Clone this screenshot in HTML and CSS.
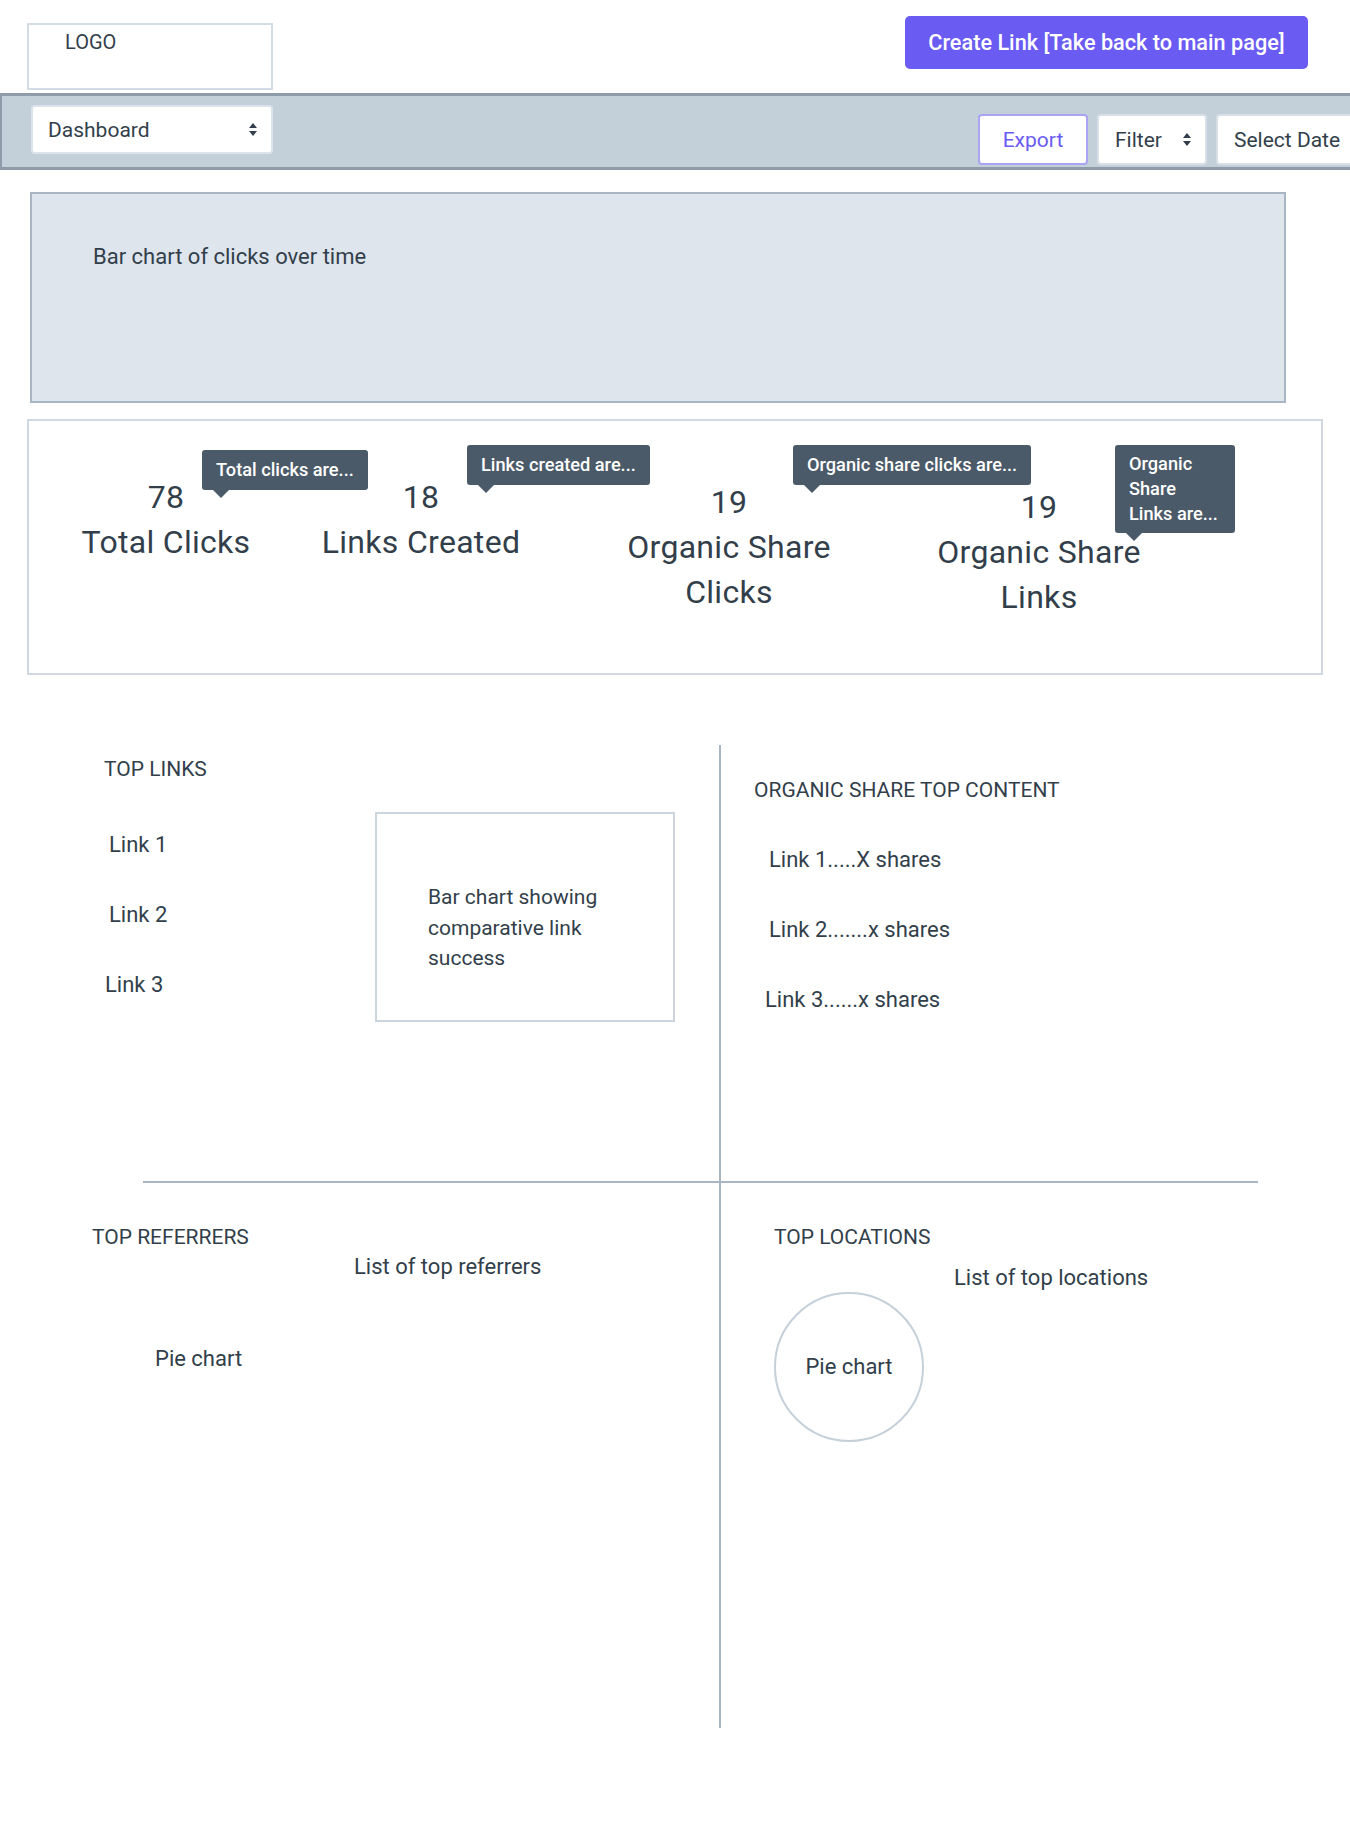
FILE: index.html
```html
<!DOCTYPE html>
<html lang="en">
<head>
<meta charset="utf-8">
<title>Dashboard</title>
<link rel="stylesheet" href="styles.css">
</head>
<body>
<header class="topbar">
  <div class="logo">LOGO</div>
  <button class="btn-primary">Create Link [Take back to main page]</button>
</header>
<nav class="navbar">
  <div class="select select-dashboard">
    <span>Dashboard</span>
    <svg class="updown" width="8" height="13" viewBox="0 0 8 13"><path d="M4 0L8 5H0Z M0 8H8L4 13Z" fill="#323f4b"/></svg>
  </div>
  <div class="nav-actions">
    <button class="btn btn-export">Export</button>
    <div class="btn select-filter">
      <span>Filter</span>
      <svg class="updown" width="8" height="13" viewBox="0 0 8 13"><path d="M4 0L8 5H0Z M0 8H8L4 13Z" fill="#323f4b"/></svg>
    </div>
    <button class="btn btn-date">Select Date</button>
  </div>
</nav>
<main>
  <section class="chart-panel">Bar chart of clicks over time</section>
  <section class="stats">
    <div class="stat stat-1">
      <div class="stat-num">78</div>
      <div class="stat-label">Total Clicks</div>
      <div class="tip tip-1">Total clicks are...</div>
    </div>
    <div class="stat stat-2">
      <div class="stat-num">18</div>
      <div class="stat-label">Links Created</div>
      <div class="tip tip-2">Links created are...</div>
    </div>
    <div class="stat stat-3">
      <div class="stat-num">19</div>
      <div class="stat-label">Organic Share Clicks</div>
      <div class="tip tip-3">Organic share clicks are...</div>
    </div>
    <div class="stat stat-4">
      <div class="stat-num">19</div>
      <div class="stat-label">Organic Share Links</div>
      <div class="tip tip-4">Organic Share Links are...</div>
    </div>
  </section>
  <section class="quadrants">
    <div class="q q-left q-top-left">
      <h2 class="q-title">TOP LINKS</h2>
      <div class="toplinks-body">
        <div class="link-list">
          <div class="link-item">Link 1</div>
          <div class="link-item">Link 2</div>
          <div class="link-item flush">Link 3</div>
        </div>
        <div class="bar-box">Bar chart showing comparative link success</div>
      </div>
    </div>
    <div class="q q-top-right">
      <h2 class="q-title">ORGANIC SHARE TOP CONTENT</h2>
      <div class="share-list">
        <div class="share-item">Link 1.....X shares</div>
        <div class="share-item">Link 2.......x shares</div>
        <div class="share-item flush">Link 3......x shares</div>
      </div>
    </div>
    <div class="divider-row"><div class="hline"></div></div>
    <div class="q q-left q-bottom-left">
      <h2 class="q-title">TOP REFERRERS</h2>
      <div class="ref-list">List of top referrers</div>
      <div class="pie-label">Pie chart</div>
    </div>
    <div class="q q-bottom-right">
      <h2 class="q-title">TOP LOCATIONS</h2>
      <div class="loc-list">List of top locations</div>
      <div class="pie-circle">Pie chart</div>
    </div>
  </section>
</main>
</body>
</html>
```
FILE: styles.css
```css
html, body {
  margin: 0;
  padding: 0;
  overflow-x: hidden;
}
body {
  width: 1350px;
  background: #ffffff;
  color: #323f4b;
  font-family: Roboto, "Liberation Sans", sans-serif;
  font-size: 22px;
  line-height: 26px;
}
button {
  font-family: inherit;
}

/* header */
.topbar {
  display: flex;
  justify-content: space-between;
  align-items: flex-start;
  height: 93px;
  box-sizing: border-box;
  padding: 16px 42px 0 27px;
}
.logo {
  margin-top: 7px;
  width: 246px;
  height: 67px;
  box-sizing: border-box;
  border: 2px solid #d3dce4;
  padding: 4px 0 0 36px;
  font-size: 20px;
  line-height: 26px;
}
.btn-primary {
  width: 403px;
  height: 53px;
  border: 0;
  border-radius: 5px;
  background: #6a5bf3;
  color: #ffffff;
  font-size: 21.7px;
  font-weight: 500;
  cursor: pointer;
}

/* nav bar */
.navbar {
  display: flex;
  justify-content: space-between;
  align-items: flex-start;
  width: 1362px;
  height: 77px;
  box-sizing: border-box;
  padding: 9px 0 0 29px;
  background: #c3cfd9;
  border-top: 3px solid #8e9ba8;
  border-bottom: 3px solid #8e9ba8;
  border-left: 2px solid #8e9ba8;
}
.select-dashboard {
  width: 242px;
  height: 49px;
  box-sizing: border-box;
  display: flex;
  align-items: center;
  justify-content: space-between;
  padding: 0 14px 0 15px;
  background: #ffffff;
  border: 2px solid #dce3ea;
  border-radius: 4px;
  font-size: 21px;
}
.nav-actions {
  display: flex;
  gap: 9px;
  margin-top: 9px;
}
.btn {
  height: 51px;
  box-sizing: border-box;
  display: flex;
  align-items: center;
  padding: 0 16px;
  background: #ffffff;
  border: 2px solid #d8dfe6;
  border-radius: 4px;
  color: #323f4b;
  font-size: 21px;
}
.btn-export {
  width: 110px;
  justify-content: center;
  border-color: #aba3f3;
  color: #6a5bf3;
}
.select-filter {
  width: 110px;
  justify-content: space-between;
  padding: 0 14px 0 16px;
}
.btn-date {
  width: 146px;
}

/* bar chart panel */
.chart-panel {
  margin: 22px 0 0 30px;
  width: 1256px;
  height: 211px;
  box-sizing: border-box;
  padding: 48px 0 0 61px;
  background: #dfe5ed;
  border: 2px solid #a8b6c3;
  font-size: 22px;
  line-height: 30px;
}

/* stats */
.stats {
  margin: 16px 0 0 27px;
  width: 1296px;
  height: 256px;
  box-sizing: border-box;
  border: 2px solid #d0d9e1;
  display: flex;
  align-items: flex-start;
  padding: 54px 0 0 27px;
}
.stat {
  position: relative;
  width: 220px;
  text-align: center;
  font-size: 32px;
  line-height: 45px;
  letter-spacing: 0.3px;
}
.stat-2 { margin-left: 35px; }
.stat-3 { margin-left: 88px; margin-top: 5px; }
.stat-4 { margin-left: 90px; margin-top: 10px; }

.tip {
  position: absolute;
  left: 50%;
  background: #4b5a68;
  color: #ffffff;
  font-size: 18.2px;
  font-weight: 500;
  line-height: 24px;
  letter-spacing: 0;
  text-align: left;
  padding: 8px 14px;
  border-radius: 3px;
  white-space: nowrap;
}
.tip::after {
  content: "";
  position: absolute;
  top: 100%;
  left: 11px;
  border-left: 8px solid transparent;
  border-right: 8px solid transparent;
  border-top: 8px solid #4b5a68;
}
.tip-1 { top: -25px; margin-left: 36px; }
.tip-2 { top: -30px; margin-left: 46px; }
.tip-3 { top: -35px; margin-left: 64px; }
.tip-4 {
  top: -40px;
  margin-left: 76px;
  width: 120px;
  box-sizing: border-box;
  white-space: normal;
  line-height: 25px;
  padding: 6px 14px 7px;
}

/* quadrants */
.quadrants {
  margin-top: 70px;
  display: grid;
  grid-template-columns: 721px 1fr;
}
.q {
  box-sizing: border-box;
}
.q-left {
  border-right: 2px solid #a9b6c3;
}
.q-title {
  margin: 0;
  font-size: 21px;
  font-weight: 400;
  line-height: 26px;
}
.q-top-left {
  height: 436px;
  padding: 11px 0 0 104px;
}
.toplinks-body {
  display: flex;
  align-items: flex-start;
  margin-top: 30px;
}
.link-list {
  width: 271px;
  padding-top: 20px;
}
.link-item,
.share-item {
  line-height: 26px;
  margin-bottom: 44px;
  padding-left: 5px;
}
.link-item.flush {
  padding-left: 1px;
}
.bar-box {
  width: 300px;
  height: 210px;
  box-sizing: border-box;
  border: 2px solid #ccd5de;
  padding: 68px 46px 0 51px;
  font-size: 21px;
  line-height: 30.5px;
}
.q-top-right {
  height: 436px;
  padding: 32px 0 0 33px;
}
.share-list {
  margin-top: 44px;
}
.share-item {
  padding-left: 15px;
}
.share-item.flush {
  padding-left: 11px;
}
.divider-row {
  grid-column: 1 / -1;
  height: 2px;
}
.hline {
  margin-left: 143px;
  width: 1115px;
  height: 2px;
  background: #a9b6c3;
}
.q-bottom-left {
  height: 545px;
  padding: 41px 0 0 92px;
}
.ref-list {
  margin: 4px 0 0 262px;
}
.pie-label {
  margin: 66px 0 0 63px;
}
.q-bottom-right {
  height: 545px;
  padding: 41px 0 0 53px;
}
.loc-list {
  margin: 15px 0 0 180px;
}
.pie-circle {
  margin-top: 1px;
  width: 150px;
  height: 150px;
  box-sizing: border-box;
  border: 2px solid #c5d0da;
  border-radius: 50%;
  display: flex;
  align-items: center;
  justify-content: center;
  font-size: 22px;
}
```
